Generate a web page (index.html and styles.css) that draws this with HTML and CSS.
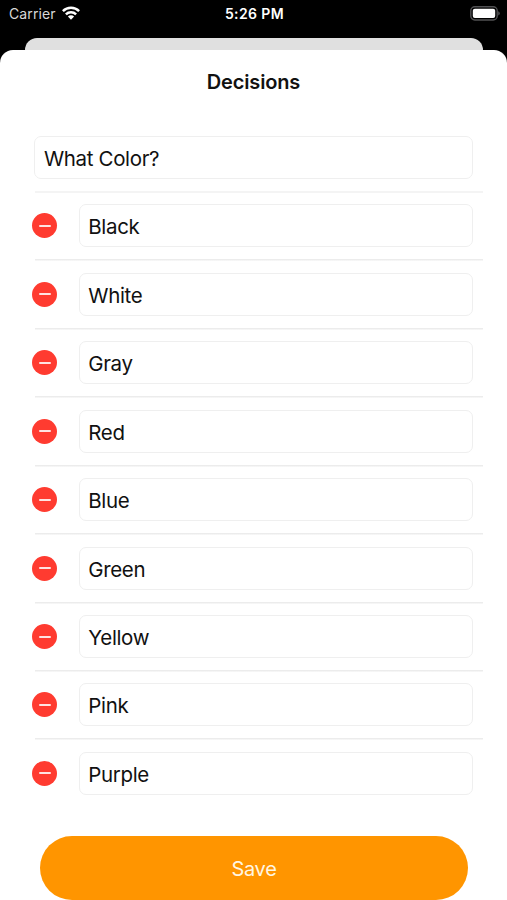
FILE: index.html
```html
<!DOCTYPE html>
<html lang="en">
<head>
<meta charset="utf-8">
<title>Decisions</title>
<link rel="stylesheet" href="styles.css">
</head>
<body>
<div class="status">
  <div class="carrier"><span>Carrier</span>
    <svg class="wifi" viewBox="0 0 18 14" width="18" height="14"><g fill="none" stroke="#fff" stroke-width="2.5"><path d="M.9 5.1a11.6 11.6 0 0 1 16.2 0"/><path d="M3.9 8.3a7.3 7.3 0 0 1 10.2 0"/></g><path d="M9 13.7 5.9 10.6a4.4 4.4 0 0 1 6.2 0z" fill="#fff"/></svg>
  </div>
  <div class="time">5:26 PM</div>
  <svg class="battery" viewBox="0 0 31 15" width="31" height="15"><rect x="1.8" y=".8" width="26.4" height="13.2" rx="4" fill="none" stroke="#515153" stroke-width="1.4"/><rect x="3.8" y="2.8" width="22.4" height="9.2" rx="2" fill="#fff"/><path d="M29.2 5.2q1.6.6 1.6 2.2t-1.6 2.2z" fill="#515153"/></svg>
</div>
<div class="back-card"></div>
<main class="sheet">
  <h1 class="title">Decisions</h1>
  <div class="question"><div class="field">What Color?</div></div>
  <ul class="rows">
    <li class="row"><span class="remove"></span><div class="field">Black</div></li>
    <li class="row"><span class="remove"></span><div class="field">White</div></li>
    <li class="row"><span class="remove"></span><div class="field">Gray</div></li>
    <li class="row"><span class="remove"></span><div class="field">Red</div></li>
    <li class="row"><span class="remove"></span><div class="field">Blue</div></li>
    <li class="row"><span class="remove"></span><div class="field">Green</div></li>
    <li class="row"><span class="remove"></span><div class="field">Yellow</div></li>
    <li class="row"><span class="remove"></span><div class="field">Pink</div></li>
    <li class="row"><span class="remove"></span><div class="field">Purple</div></li>
  </ul>
  <div class="save">Save</div>
</main>
</body>
</html>
```
FILE: styles.css
```css
* { box-sizing: border-box; }
body {
  margin: 0;
  height: 900px;
  overflow: hidden;
  background: #000;
  color: #111;
  font-family: Inter, "Liberation Sans", sans-serif;
}
.status {
  display: grid;
  grid-template-columns: 1fr auto 1fr;
  align-items: center;
  height: 38px;
  padding: 0 7px 11px 9px;
  color: #fff;
  font-size: 14px;
}
.carrier { display: flex; align-items: center; gap: 6px; color: #d8d8d8; letter-spacing: .1px; }
.wifi { margin-top: -1px; }
.time { font-weight: 600; letter-spacing: .4px; }
.battery { justify-self: end; margin-top: -1px; }
.back-card {
  height: 24px;
  margin: 0 24px 0 25px;
  border-radius: 12px 12px 0 0;
  background: #e0e0e0;
}
.sheet {
  height: 850px;
  margin-top: -12px;
  border-radius: 13px 13px 0 0;
  background: #fff;
  overflow: hidden;
}
.title {
  margin: 0;
  height: 86.4px;
  padding-top: 18px;
  font-size: 20px;
  line-height: 29px;
  font-weight: 600;
  letter-spacing: -.15px;
  text-align: center;
}
.question { height: 54.6px; padding: 0 34px; }
.field {
  flex: 1;
  height: 43px;
  padding-left: 9px;
  border: 1px solid #efefef;
  border-radius: 7px;
  font-size: 20.5px;
  line-height: 43px;
  letter-spacing: -.35px;
}
.row .field { padding-left: 8.3px; }
.rows { margin: 0; padding: 0; list-style: none; }
.row {
  display: flex;
  align-items: center;
  gap: 22px;
  height: 68.45px;
  padding: 1.4px 34px 0 32px;
  background: linear-gradient(#ececec, #ececec) 35px 0 / 448px 1.5px no-repeat;
}
.row:first-child { background-image: linear-gradient(#f4f4f4, #f4f4f4); background-size: 448px 3px; background-position: 35px -1px; }
.remove {
  display: flex;
  align-items: center;
  justify-content: center;
  width: 25px;
  height: 25px;
  border-radius: 50%;
  background: #ff3b30;
}
.remove::before {
  content: "";
  width: 12px;
  height: 2px;
  border-radius: 1px;
  background: #ffe4e2;
}
.save {
  height: 64px;
  margin: 29px 39px 0 40px;
  border-radius: 32px;
  background: #ff9500;
  color: #fff6e3;
  font-size: 20px;
  line-height: 66px;
  letter-spacing: -.3px;
  text-align: center;
}
```
